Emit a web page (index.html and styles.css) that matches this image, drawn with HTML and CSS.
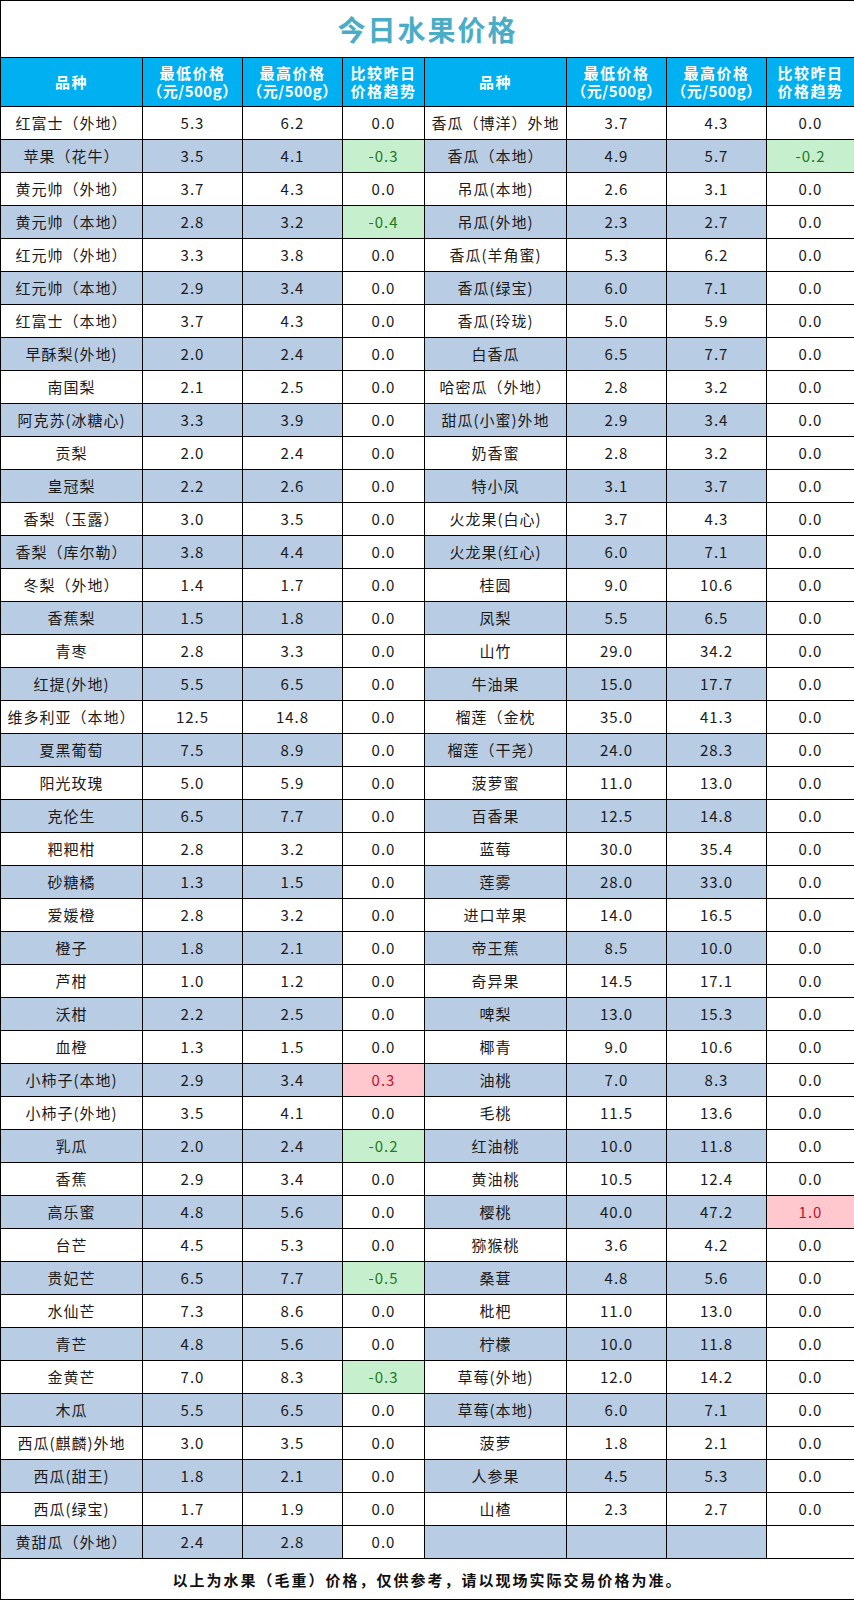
FILE: index.html
```html
<!DOCTYPE html>
<html lang="zh-CN">
<head>
<meta charset="utf-8">
<title>今日水果价格</title>
<link rel="stylesheet" href="styles.css">
</head>
<body>
<table class="sheet">
<colgroup>
<col class="c-name"><col class="c-num"><col class="c-num"><col class="c-trend">
<col class="c-name"><col class="c-num"><col class="c-num"><col class="c-trend2">
</colgroup>
<thead>
<tr class="title-row"><td colspan="8" class="title">今日水果价格</td></tr>
<tr class="head-row">
<th>品种</th><th>最低价格<br><span class="unit">（元/500g）</span></th><th>最高价格<br><span class="unit">（元/500g）</span></th><th>比较昨日<br>价格趋势</th>
<th>品种</th><th>最低价格<br><span class="unit">（元/500g）</span></th><th>最高价格<br><span class="unit">（元/500g）</span></th><th>比较昨日<br>价格趋势</th>
</tr>
</thead>
<tbody>
<tr><td>红富士（外地）</td><td>5.3</td><td>6.2</td><td class="tr">0.0</td><td>香瓜（博洋）外地</td><td>3.7</td><td>4.3</td><td class="tr">0.0</td></tr>
<tr class="alt"><td>苹果（花牛）</td><td>3.5</td><td>4.1</td><td class="tr down">-0.3</td><td>香瓜（本地）</td><td>4.9</td><td>5.7</td><td class="tr down">-0.2</td></tr>
<tr><td>黄元帅（外地）</td><td>3.7</td><td>4.3</td><td class="tr">0.0</td><td>吊瓜(本地)</td><td>2.6</td><td>3.1</td><td class="tr">0.0</td></tr>
<tr class="alt"><td>黄元帅（本地）</td><td>2.8</td><td>3.2</td><td class="tr down">-0.4</td><td>吊瓜(外地)</td><td>2.3</td><td>2.7</td><td class="tr">0.0</td></tr>
<tr><td>红元帅（外地）</td><td>3.3</td><td>3.8</td><td class="tr">0.0</td><td>香瓜(羊角蜜)</td><td>5.3</td><td>6.2</td><td class="tr">0.0</td></tr>
<tr class="alt"><td>红元帅（本地）</td><td>2.9</td><td>3.4</td><td class="tr">0.0</td><td>香瓜(绿宝)</td><td>6.0</td><td>7.1</td><td class="tr">0.0</td></tr>
<tr><td>红富士（本地）</td><td>3.7</td><td>4.3</td><td class="tr">0.0</td><td>香瓜(玲珑)</td><td>5.0</td><td>5.9</td><td class="tr">0.0</td></tr>
<tr class="alt"><td>早酥梨(外地)</td><td>2.0</td><td>2.4</td><td class="tr">0.0</td><td>白香瓜</td><td>6.5</td><td>7.7</td><td class="tr">0.0</td></tr>
<tr><td>南国梨</td><td>2.1</td><td>2.5</td><td class="tr">0.0</td><td>哈密瓜（外地）</td><td>2.8</td><td>3.2</td><td class="tr">0.0</td></tr>
<tr class="alt"><td>阿克苏(冰糖心)</td><td>3.3</td><td>3.9</td><td class="tr">0.0</td><td>甜瓜(小蜜)外地</td><td>2.9</td><td>3.4</td><td class="tr">0.0</td></tr>
<tr><td>贡梨</td><td>2.0</td><td>2.4</td><td class="tr">0.0</td><td>奶香蜜</td><td>2.8</td><td>3.2</td><td class="tr">0.0</td></tr>
<tr class="alt"><td>皇冠梨</td><td>2.2</td><td>2.6</td><td class="tr">0.0</td><td>特小凤</td><td>3.1</td><td>3.7</td><td class="tr">0.0</td></tr>
<tr><td>香梨（玉露）</td><td>3.0</td><td>3.5</td><td class="tr">0.0</td><td>火龙果(白心)</td><td>3.7</td><td>4.3</td><td class="tr">0.0</td></tr>
<tr class="alt"><td>香梨（库尔勒）</td><td>3.8</td><td>4.4</td><td class="tr">0.0</td><td>火龙果(红心)</td><td>6.0</td><td>7.1</td><td class="tr">0.0</td></tr>
<tr><td>冬梨（外地）</td><td>1.4</td><td>1.7</td><td class="tr">0.0</td><td>桂圆</td><td>9.0</td><td>10.6</td><td class="tr">0.0</td></tr>
<tr class="alt"><td>香蕉梨</td><td>1.5</td><td>1.8</td><td class="tr">0.0</td><td>凤梨</td><td>5.5</td><td>6.5</td><td class="tr">0.0</td></tr>
<tr><td>青枣</td><td>2.8</td><td>3.3</td><td class="tr">0.0</td><td>山竹</td><td>29.0</td><td>34.2</td><td class="tr">0.0</td></tr>
<tr class="alt"><td>红提(外地)</td><td>5.5</td><td>6.5</td><td class="tr">0.0</td><td>牛油果</td><td>15.0</td><td>17.7</td><td class="tr">0.0</td></tr>
<tr><td>维多利亚（本地）</td><td>12.5</td><td>14.8</td><td class="tr">0.0</td><td>榴莲（金枕</td><td>35.0</td><td>41.3</td><td class="tr">0.0</td></tr>
<tr class="alt"><td>夏黑葡萄</td><td>7.5</td><td>8.9</td><td class="tr">0.0</td><td>榴莲（干尧）</td><td>24.0</td><td>28.3</td><td class="tr">0.0</td></tr>
<tr><td>阳光玫瑰</td><td>5.0</td><td>5.9</td><td class="tr">0.0</td><td>菠萝蜜</td><td>11.0</td><td>13.0</td><td class="tr">0.0</td></tr>
<tr class="alt"><td>克伦生</td><td>6.5</td><td>7.7</td><td class="tr">0.0</td><td>百香果</td><td>12.5</td><td>14.8</td><td class="tr">0.0</td></tr>
<tr><td>粑粑柑</td><td>2.8</td><td>3.2</td><td class="tr">0.0</td><td>蓝莓</td><td>30.0</td><td>35.4</td><td class="tr">0.0</td></tr>
<tr class="alt"><td>砂糖橘</td><td>1.3</td><td>1.5</td><td class="tr">0.0</td><td>莲雾</td><td>28.0</td><td>33.0</td><td class="tr">0.0</td></tr>
<tr><td>爱媛橙</td><td>2.8</td><td>3.2</td><td class="tr">0.0</td><td>进口苹果</td><td>14.0</td><td>16.5</td><td class="tr">0.0</td></tr>
<tr class="alt"><td>橙子</td><td>1.8</td><td>2.1</td><td class="tr">0.0</td><td>帝王蕉</td><td>8.5</td><td>10.0</td><td class="tr">0.0</td></tr>
<tr><td>芦柑</td><td>1.0</td><td>1.2</td><td class="tr">0.0</td><td>奇异果</td><td>14.5</td><td>17.1</td><td class="tr">0.0</td></tr>
<tr class="alt"><td>沃柑</td><td>2.2</td><td>2.5</td><td class="tr">0.0</td><td>啤梨</td><td>13.0</td><td>15.3</td><td class="tr">0.0</td></tr>
<tr><td>血橙</td><td>1.3</td><td>1.5</td><td class="tr">0.0</td><td>椰青</td><td>9.0</td><td>10.6</td><td class="tr">0.0</td></tr>
<tr class="alt"><td>小柿子(本地)</td><td>2.9</td><td>3.4</td><td class="tr up">0.3</td><td>油桃</td><td>7.0</td><td>8.3</td><td class="tr">0.0</td></tr>
<tr><td>小柿子(外地)</td><td>3.5</td><td>4.1</td><td class="tr">0.0</td><td>毛桃</td><td>11.5</td><td>13.6</td><td class="tr">0.0</td></tr>
<tr class="alt"><td>乳瓜</td><td>2.0</td><td>2.4</td><td class="tr down">-0.2</td><td>红油桃</td><td>10.0</td><td>11.8</td><td class="tr">0.0</td></tr>
<tr><td>香蕉</td><td>2.9</td><td>3.4</td><td class="tr">0.0</td><td>黄油桃</td><td>10.5</td><td>12.4</td><td class="tr">0.0</td></tr>
<tr class="alt"><td>高乐蜜</td><td>4.8</td><td>5.6</td><td class="tr">0.0</td><td>樱桃</td><td>40.0</td><td>47.2</td><td class="tr up">1.0</td></tr>
<tr><td>台芒</td><td>4.5</td><td>5.3</td><td class="tr">0.0</td><td>猕猴桃</td><td>3.6</td><td>4.2</td><td class="tr">0.0</td></tr>
<tr class="alt"><td>贵妃芒</td><td>6.5</td><td>7.7</td><td class="tr down">-0.5</td><td>桑葚</td><td>4.8</td><td>5.6</td><td class="tr">0.0</td></tr>
<tr><td>水仙芒</td><td>7.3</td><td>8.6</td><td class="tr">0.0</td><td>枇杷</td><td>11.0</td><td>13.0</td><td class="tr">0.0</td></tr>
<tr class="alt"><td>青芒</td><td>4.8</td><td>5.6</td><td class="tr">0.0</td><td>柠檬</td><td>10.0</td><td>11.8</td><td class="tr">0.0</td></tr>
<tr><td>金黄芒</td><td>7.0</td><td>8.3</td><td class="tr down">-0.3</td><td>草莓(外地)</td><td>12.0</td><td>14.2</td><td class="tr">0.0</td></tr>
<tr class="alt"><td>木瓜</td><td>5.5</td><td>6.5</td><td class="tr">0.0</td><td>草莓(本地)</td><td>6.0</td><td>7.1</td><td class="tr">0.0</td></tr>
<tr><td>西瓜(麒麟)外地</td><td>3.0</td><td>3.5</td><td class="tr">0.0</td><td>菠萝</td><td>1.8</td><td>2.1</td><td class="tr">0.0</td></tr>
<tr class="alt"><td>西瓜(甜王)</td><td>1.8</td><td>2.1</td><td class="tr">0.0</td><td>人参果</td><td>4.5</td><td>5.3</td><td class="tr">0.0</td></tr>
<tr><td>西瓜(绿宝)</td><td>1.7</td><td>1.9</td><td class="tr">0.0</td><td>山楂</td><td>2.3</td><td>2.7</td><td class="tr">0.0</td></tr>
<tr class="alt"><td>黄甜瓜（外地）</td><td>2.4</td><td>2.8</td><td class="tr">0.0</td><td></td><td></td><td></td><td class="tr"></td></tr>
</tbody>
<tfoot>
<tr class="foot-row"><td colspan="8" class="note">以上为水果（毛重）价格，仅供参考，请以现场实际交易价格为准。</td></tr>
</tfoot>
</table>
</body>
</html>
```
FILE: styles.css
```css
html, body {
  margin: 0;
  padding: 0;
  background: #ffffff;
}

body {
  font-family: "Noto Sans CJK SC", "Noto Sans", sans-serif;
  color: #1a1a1a;
}

.sheet {
  border-collapse: collapse;
  table-layout: fixed;
  width: 854px;
}

.c-name { width: 142px; }
.c-num { width: 100px; }
.c-trend { width: 82px; }
.c-trend2 { width: 88px; }

.sheet td,
.sheet th {
  border: 1px solid #000;
  padding: 0;
  text-align: center;
  vertical-align: middle;
  white-space: nowrap;
  overflow: visible;
}

.title-row td {
  height: 56px;
}

.title {
  font-size: 28px;
  font-weight: 700;
  letter-spacing: 2px;
  color: #4bacc6;
  background: #ffffff;
}

.head-row th {
  height: 48px;
  background: #00b0f0;
  color: #ffffff;
  font-size: 15px;
  font-weight: 700;
  line-height: 18px;
  letter-spacing: 1.5px;
}

.head-row .unit {
  display: inline-block;
  letter-spacing: 0.5px;
  text-spacing-trim: space-all;
}

tbody td {
  height: 32px;
  font-size: 15px;
  line-height: 18px;
  letter-spacing: 1px;
  background: #ffffff;
}

tbody tr.alt td {
  background: #b8cce4;
}

tbody tr td.tr,
tbody tr.alt td.tr {
  background: #ffffff;
}

tbody tr td.tr.down {
  background: #c6efce;
  color: #1e7a1e;
}

tbody tr td.tr.up {
  background: #ffc7ce;
  color: #c0142a;
}

.foot-row td {
  height: 40px;
}

.note {
  font-size: 15px;
  font-weight: 700;
  letter-spacing: 2px;
  color: #111;
}
```
